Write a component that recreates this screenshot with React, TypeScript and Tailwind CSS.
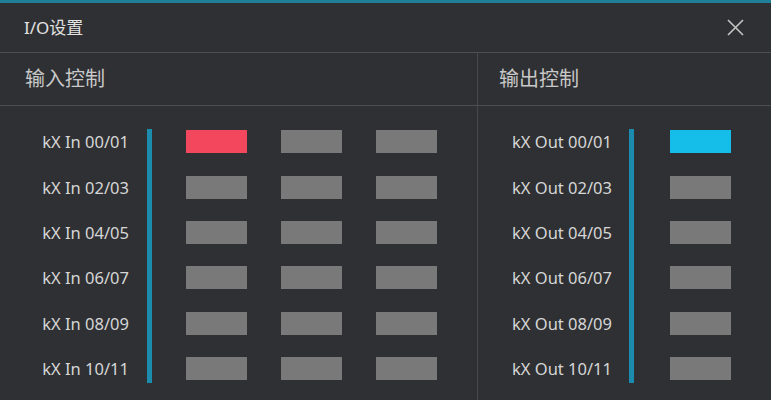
import { useState } from "react";

type Row = { label: string; slots: number[] };

const inputs = ["00/01", "02/03", "04/05", "06/07", "08/09", "10/11"];

const Bar = () => (
  <div className="mt-[10px] flex w-[5px] flex-col items-center">
    <div className="h-[254px] w-[5px] bg-[#1b8cae]" />
    <div className="w-px flex-1 bg-[#26272a]" />
  </div>
);

const Swatch = ({ on, color }: { on: boolean; color: string }) => (
  <div className="flex h-[45.4px] items-center">
    <div className={`h-[23px] w-[61px] ${on ? color : "bg-[#797979]"}`} />
  </div>
);

const IOSettings = () => {
  const [inSel] = useState<number[]>([0]);
  const [outSel] = useState<number>(0);

  const inRows: Row[] = inputs.map((n, i) => ({
    label: `kX In ${n}`,
    slots: inSel.includes(i) ? [0] : [],
  }));

  return (
    <div className="flex h-[400px] w-[771px] flex-col overflow-hidden bg-[#2f3033] font-['Noto_Sans','Noto_Sans_CJK_SC',sans-serif] text-[#d6d6d6]">
      <div className="h-[3px] bg-[#1f7f99]" />
      <div className="flex h-[50px] items-center justify-between border-b border-[#4d4e51] pl-[24px] pr-[27px]">
        <span className="text-[17px] text-[#e2e2e2]">I/O设置</span>
        <svg width="17" height="17" viewBox="0 0 17 17" className="text-[#c4c4c4]">
          <path d="M1 1L16 16M16 1L1 16" stroke="currentColor" strokeWidth="1.6" />
        </svg>
      </div>

      <div className="flex flex-1">
        {/* input side */}
        <div className="flex w-[478px] flex-col border-r border-[#47484b]">
          <div className="flex h-[53px] items-center border-b border-[#4d4e51] pl-[25px] text-[20px] text-[#c8c8c8]">
            输入控制
          </div>
          <div className="flex flex-1 pt-[13px]">
            <div className="flex w-[129px] flex-col items-end pt-[1px]">
              {inRows.map((r) => (
                <div key={r.label} className="flex h-[45.4px] items-center text-[16.5px]">
                  {r.label}
                </div>
              ))}
            </div>
            <div className="ml-[18px]">
              <Bar />
            </div>
            <div className="ml-[34px] flex gap-[34px]">
              {[0, 1, 2].map((c) => (
                <div key={c} className="flex flex-col">
                  {inRows.map((r) => (
                    <Swatch key={r.label} on={c === 0 && r.slots.includes(0)} color="bg-[#f2475c]" />
                  ))}
                </div>
              ))}
            </div>
          </div>
        </div>

        {/* output side */}
        <div className="flex flex-1 flex-col">
          <div className="flex h-[53px] items-center border-b border-[#4d4e51] pl-[21px] text-[20px] text-[#c8c8c8]">
            输出控制
          </div>
          <div className="flex flex-1 pt-[13px]">
            <div className="flex w-[134px] flex-col items-end pt-[1px]">
              {inputs.map((n) => (
                <div key={n} className="flex h-[45.4px] items-center text-[16.5px]">
                  kX Out {n}
                </div>
              ))}
            </div>
            <div className="ml-[17px]">
              <Bar />
            </div>
            <div className="ml-[36px] flex flex-col">
              {inputs.map((n, i) => (
                <Swatch key={n} on={i === outSel} color="bg-[#15bde9]" />
              ))}
            </div>
          </div>
        </div>
      </div>
    </div>
  );
};

export default function App() {
  return <IOSettings />;
}
